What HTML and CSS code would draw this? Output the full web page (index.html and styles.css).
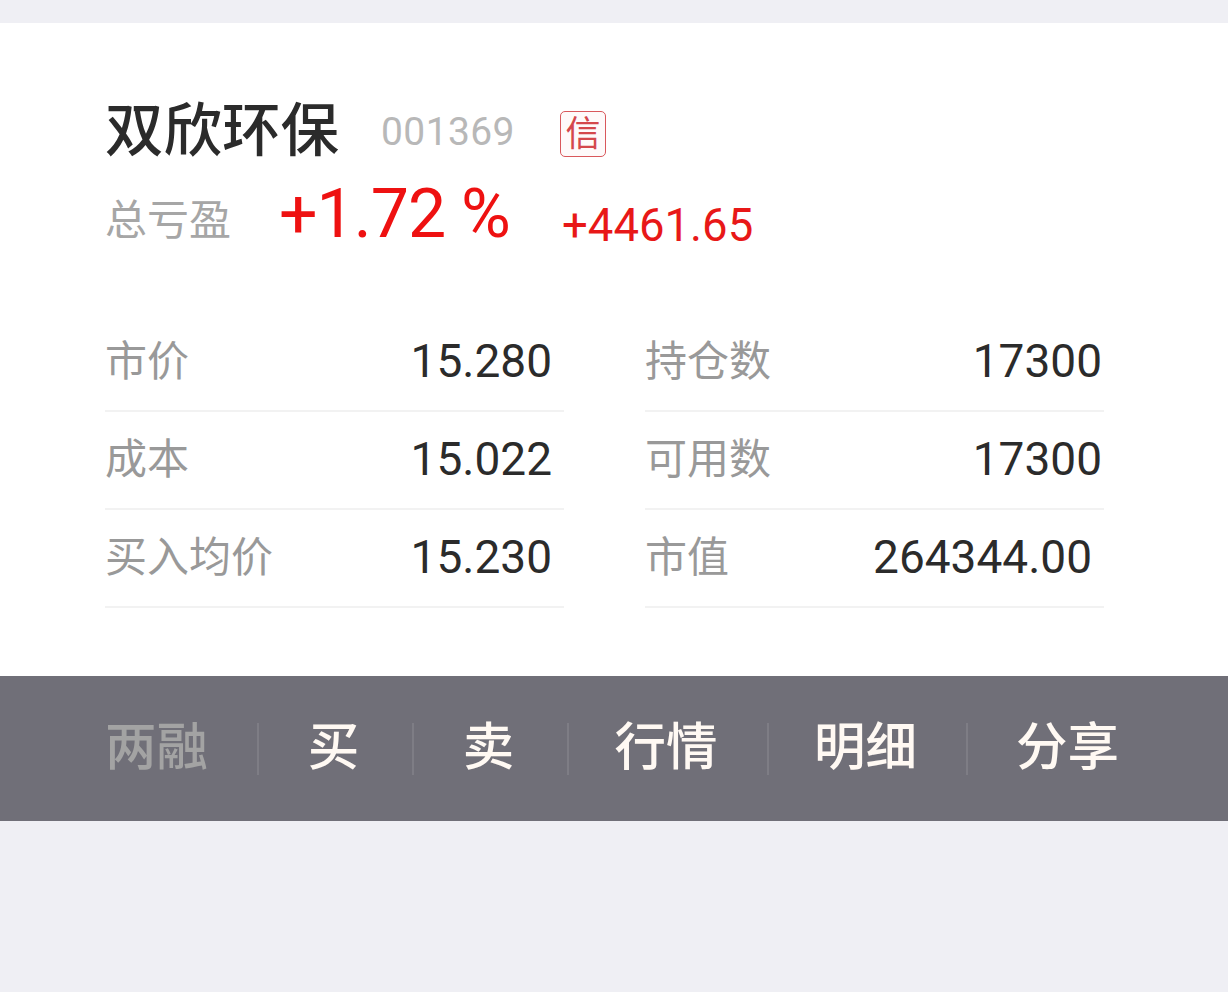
FILE: index.html
```html
<!DOCTYPE html>
<html>
<head>
<meta charset="utf-8" />
<title>持仓</title>
<link rel="stylesheet" href="styles.css">
</head>
<body>
<div class="card">
    <div class="head">
        <span class="name">双欣环保</span>
        <span class="code">001369</span>
        <span class="tag">信</span>
    </div>
    <div class="profit">
        <span class="profit-label">总亏盈</span>
        <span class="rate">+1.72 %</span>
        <span class="amount">+4461.65</span>
    </div>
    <div class="grid">
        <div class="cell"><span class="label">市价</span><span class="val">15.280</span></div>
        <div class="cell"><span class="label">持仓数</span><span class="val end">17300</span></div>
        <div class="cell"><span class="label">成本</span><span class="val">15.022</span></div>
        <div class="cell"><span class="label">可用数</span><span class="val end">17300</span></div>
        <div class="cell"><span class="label">买入均价</span><span class="val">15.230</span></div>
        <div class="cell"><span class="label">市值</span><span class="val">264344.00</span></div>
    </div>
</div>
<div class="bar">
    <span class="btn off b1">两融</span>
    <span class="btn b2">买</span>
    <span class="btn b3">卖</span>
    <span class="btn b4">行情</span>
    <span class="btn b5">明细</span>
    <span class="btn b6">分享</span>
</div>
</body>
</html>
```

FILE: styles.css
```css
*{ margin:0; padding:0; box-sizing:border-box;}
html,body{ height:100%;}
body{ background:#efeff4; padding-top:23px; font-family:"Roboto","Noto Sans CJK SC",sans-serif; overflow:hidden;}
.card{ background:#fff; height:653px; padding:75px 124px 0 105px;}
.head{ display:flex; align-items:center; height:66px;}
.name{ font-size:58.5px; font-weight:500; line-height:66px; color:#2b2b2b; width:276px; white-space:nowrap;}
.code{ font-size:39px; color:#b8b8b8; width:179px; letter-spacing:.4px; padding-top:2px;}
.tag{ width:46px; height:46px; margin-top:5px; border:1.5px solid #d9585c; border-radius:5px; color:#d4484c; font-size:35px; line-height:46px; text-align:center; background:#fefafa;}
.profit{ display:flex; align-items:center; height:76px; margin-top:16px;}
.profit-label{ font-size:42px; color:#a6a6a6; width:174px; padding-bottom:4px;}
.rate{ font-size:68px; color:#ee1111; width:283px; white-space:nowrap; letter-spacing:-1px; padding-bottom:8px;}
.amount{ font-size:45.5px; color:#e81818; white-space:nowrap; margin-top:14px;}
.grid{ display:grid; grid-template-columns:459px 459px; column-gap:81px; margin-top:58px;}
.cell{ display:flex; justify-content:space-between; align-items:center; height:98px; padding:0 2px 0 0; border-bottom:2px solid #f2f2f2;}
.label{ font-size:42px; color:#999; padding-bottom:10px;}
.val{ font-size:46px; color:#2b2b2b; padding-right:10px; padding-bottom:2px;}
.val.end{ padding-right:0;}
.bar{ background:#706f78; height:145px; display:flex; align-items:center; color:#fff9f3; font-size:51.5px; font-weight:500;}
.btn{ height:52px; line-height:50px; text-align:center; border-right:2px solid #7e7d85; white-space:nowrap; padding-right:4px;}
.btn.off{ color:#a3a3a3;}
.b1{ width:259px; padding-left:105px; text-align:left;}
.b2{ width:155px;}
.b3{ width:155px;}
.b4{ width:200px;}
.b5{ width:199px;}
.b6{ border-right:0; width:203px;}
```
